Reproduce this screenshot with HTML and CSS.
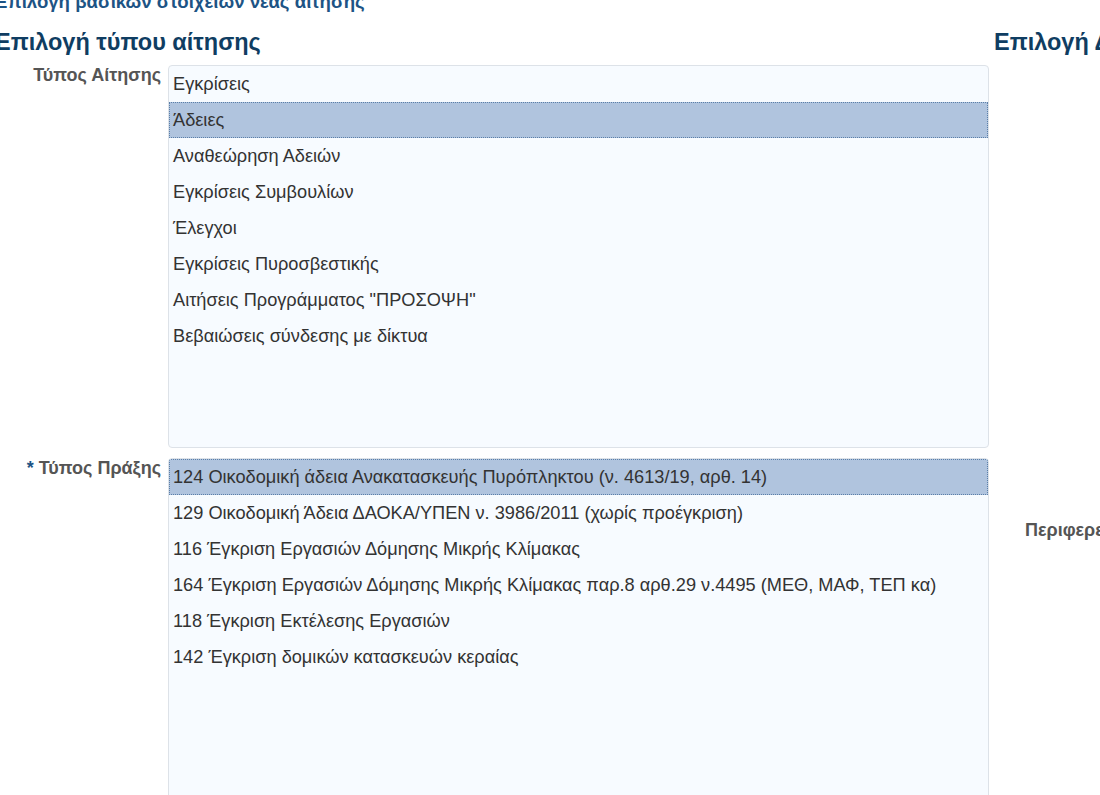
FILE: index.html
```html
<!DOCTYPE html>
<html lang="el">
<head>
  <meta charset="UTF-8">
  <title>Νέα αίτηση</title>
  <link rel="stylesheet" href="styles.css">
</head>
<body>
<div class="page">
  <h2 class="page-title">Επιλογή βασικών στοιχείων νέας αίτησης</h2>

  <div class="columns">
    <div class="column">
      <h3 class="section-title">Επιλογή τύπου αίτησης</h3>

      <div class="form-row">
        <label class="form-label" for="typeList">Τύπος Αίτησης</label>
        <div class="listbox listbox-type" id="typeList">
          <div class="option">Εγκρίσεις</div>
          <div class="option selected">Άδειες</div>
          <div class="option">Αναθεώρηση Αδειών</div>
          <div class="option">Εγκρίσεις Συμβουλίων</div>
          <div class="option">Έλεγχοι</div>
          <div class="option">Εγκρίσεις Πυροσβεστικής</div>
          <div class="option">Αιτήσεις Προγράμματος "ΠΡΟΣΟΨΗ"</div>
          <div class="option">Βεβαιώσεις σύνδεσης με δίκτυα</div>
        </div>
      </div>

      <div class="form-row">
        <label class="form-label" for="actList"><span class="required">*</span> Τύπος Πράξης</label>
        <div class="listbox listbox-act" id="actList">
          <div class="option selected">124 Οικοδομική άδεια Ανακατασκευής Πυρόπληκτου (ν. 4613/19, αρθ. 14)</div>
          <div class="option">129 Οικοδομική Άδεια ΔΑΟΚΑ/ΥΠΕΝ ν. 3986/2011 (χωρίς προέγκριση)</div>
          <div class="option">116 Έγκριση Εργασιών Δόμησης Μικρής Κλίμακας</div>
          <div class="option">164 Έγκριση Εργασιών Δόμησης Μικρής Κλίμακας παρ.8 αρθ.29 ν.4495 (ΜΕΘ, ΜΑΦ, ΤΕΠ κα)</div>
          <div class="option">118 Έγκριση Εκτέλεσης Εργασιών</div>
          <div class="option">142 Έγκριση δομικών κατασκευών κεραίας</div>
        </div>
      </div>
    </div>

    <div class="column column-side">
      <h3 class="section-title">Επιλογή Διεύθυνσης</h3>
      <div class="side-row">
        <label class="form-label">Περιφερειακή Ενότητα</label>
      </div>
    </div>
  </div>
</div>
</body>
</html>
```

FILE: styles.css
```css
:root {
  --title: #1d5485;
  --heading: #0f3d62;
  --label: #555555;
  --text: #333333;
  --border: #dde2e8;
  --list-bg: #f7fbff;
  --selected: #b0c4de;
}

* {
  box-sizing: border-box;
}

body {
  margin: 0;
  font-family: "Liberation Sans", Arial, sans-serif;
  color: var(--text);
  background: #ffffff;
  overflow: hidden;
}

.page {
  margin: -8px 0 0 -5px;
  width: 1300px;
}

.page-title {
  margin: 0;
  font-size: 18.6px;
  line-height: 20px;
  font-weight: bold;
  color: var(--title);
}

.columns {
  display: grid;
  grid-template-columns: 999px 1fr;
}

.column-side {
  white-space: nowrap;
}

.section-title {
  margin: 16px 0 9px;
  font-size: 23.5px;
  line-height: 28px;
  font-weight: bold;
  color: var(--heading);
}

.form-row {
  display: flex;
  align-items: flex-start;
  margin-bottom: 10px;
}

.form-label {
  width: 173px;
  flex: none;
  padding: 0 7px 0 0;
  text-align: right;
  font-size: 18px;
  line-height: 20px;
  font-weight: bold;
  color: var(--label);
}

.required {
  color: var(--title);
}

.listbox {
  width: 821px;
  border: 1px solid var(--border);
  border-radius: 4px;
  background: var(--list-bg);
  overflow: hidden;
}

.listbox-type {
  height: 383px;
}

.listbox-act {
  height: 360px;
}

.option {
  height: 36px;
  padding: 0 4px;
  font-size: 18.2px;
  line-height: 36px;
  white-space: nowrap;
}

.option.selected {
  background: var(--selected);
  outline: 1px dotted #5b7fa8;
  outline-offset: -1px;
}

.side-row {
  margin-top: 464px;
  padding-left: 31px;
}

.side-row .form-label {
  display: block;
  width: auto;
  text-align: left;
  padding: 0;
}
```
